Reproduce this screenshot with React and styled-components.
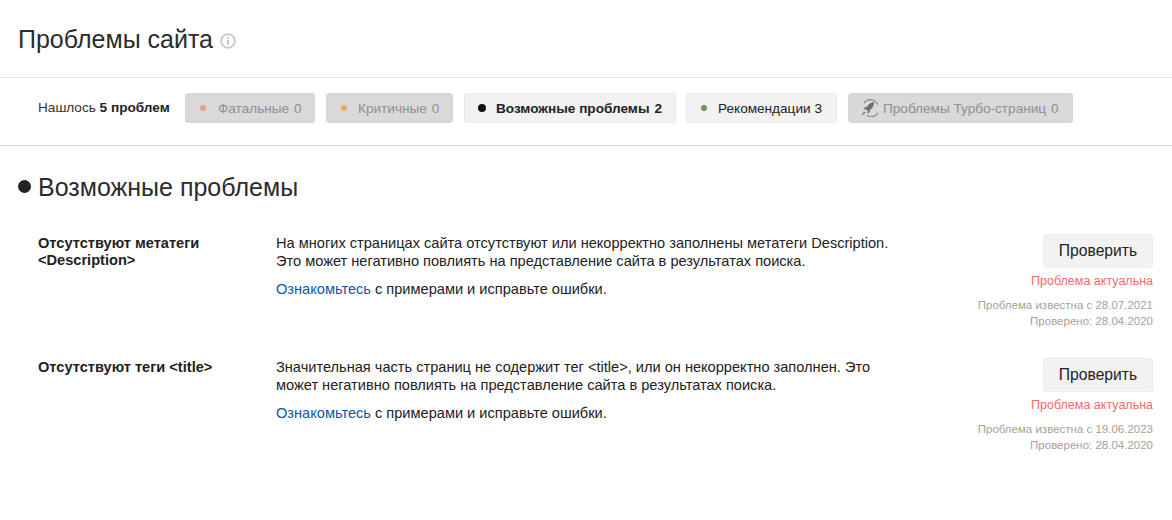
import React from 'react';
import styled, { createGlobalStyle } from 'styled-components';

const Global = createGlobalStyle`
  html, body { margin: 0; padding: 0; background: #fff; }
  body { font-family: "Liberation Sans", Arial, sans-serif; color: #222; }
`;
const Page = styled.div`width: 1172px; height: 520px; overflow: hidden; background: #fff;`;
const Header = styled.header`
  height: 78px; box-sizing: border-box; border-bottom: 1px solid #e3e3e3;
  display: flex; align-items: flex-start; padding: 24px 0 0 18px; gap: 7px;
`;
const Title = styled.h1`margin: 0; font-size: 25px; line-height: 30px; font-weight: 400; color: #2b2b2b;`;
const InfoWrap = styled.span`display: flex; padding-top: 9px; color: #c8c8c8;`;
const FilterBar = styled.nav`
  height: 68px; box-sizing: border-box; border-bottom: 1px solid #dcdcdc;
  display: flex; align-items: flex-start; padding: 15px 0 0 38px;
`;
const Found = styled.div`
  font-size: 13.6px; line-height: 30px; color: #333; width: 147px; flex: none;
  b { color: #222; font-weight: 700; }
`;
const Chip = styled.div`
  height: 30px; width: ${p => p.$w}px; box-sizing: border-box; display: flex; align-items: center;
  padding-left: ${p => p.$pl || 14}px; margin-right: ${p => p.$gap || 11}px;
  font-size: 13.6px; white-space: nowrap; border-radius: 3px;
  border: 1px solid ${p => p.$disabled ? '#d6d6d6' : '#e9e9e9'};
  background: ${p => p.$disabled ? '#d9d9d9' : '#f2f2f2'};
  color: ${p => p.$disabled ? '#8f8f8f' : '#222'};
  font-weight: ${p => p.$bold ? 700 : 400};
`;
const Dot = styled.span`
  width: ${p => p.$size}px; height: ${p => p.$size}px; border-radius: 50%;
  background: ${p => p.$color}; flex: none; margin-right: ${p => p.$mr}px;
`;
const Count = styled.span`margin-left: ${p => p.$ml ?? 5}px;`;
const Section = styled.section`padding: 26px 19px 0 18px;`;
const SectionHead = styled.div`display: flex; align-items: center; height: 30px; margin-bottom: 32px;`;
const HeadDot = styled.span`width: 13px; height: 13px; border-radius: 50%; background: #222; margin: 0 7px 2px 0;`;
const H2 = styled.h2`margin: 0; font-size: 25px; line-height: 30px; font-weight: 400; color: #2b2b2b;`;
const Issue = styled.article`
  display: grid; grid-template-columns: 238px 640px 1fr; padding-left: 20px; min-height: 124px;
`;
const IssueName = styled.div`font-size: 14.6px; line-height: 17px; font-weight: 700; color: #222; padding-top: 1px;`;
const Body = styled.div`font-size: 14.6px; line-height: 18px; color: #222;`;
const Para = styled.p`margin: 0 0 10px;`;
const Link = styled.a`color: #0b58a8; text-decoration: none;`;
const Aside = styled.div`display: flex; flex-direction: column; align-items: flex-end;`;
const Button = styled.button`
  width: 110px; height: 34px; border: 1px solid #ececec; border-radius: 3px; background: #f2f2f2;
  font: 15.7px "Liberation Sans", Arial, sans-serif; color: #222; padding: 0;
`;
const Status = styled.div`font-size: 12.5px; line-height: 14px; color: #f96a6a; margin-top: 6px;`;
const Dates = styled.div`font-size: 11.5px; line-height: 16px; color: #a9a09b; margin-top: 9px; text-align: right;`;

const Info = () => (
  <svg width="16" height="16" viewBox="0 0 16 16" fill="none" stroke="currentColor">
    <circle cx="8" cy="8" r="6.900" strokeWidth="1.800" />
    <path d="M8 7v5" strokeWidth="2" />
    <path d="M8 3.800v2" strokeWidth="2" />
  </svg>
);
const Rocket = () => (
  <svg width="18" height="18" viewBox="0 0 18 18" fill="none" style={{ marginRight: 5, flex: 'none' }}>
    <path d="M4 4.200A7.600 7.600 0 0 1 16 3" stroke="#8a8a8a" strokeWidth="1.100" />
    <path d="M16 3.500A7.600 7.600 0 0 1 7 16.200" stroke="#8a8a8a" strokeWidth="1.100" />
    <path d="M14 2.800c-3.200.5-5.300 2.400-7.300 5.300l-2 .5-1.500 2 2.700-.4 1.900 1.900-.4 2.600 2-1.500.5-2c2.900-2 4-4.500 4.100-8.400z" fill="#6f6f6f" />
    <path d="M4 12.500 1.500 16.500 5.500 14z" fill="#6f6f6f" />
  </svg>
);

const issues = [
  { name: <>Отсутствуют метатеги<br />&lt;Description&gt;</>, text: <>На многих страницах сайта отсутствуют или некорректно заполнены метатеги Description.<br />Это может негативно повлиять на представление сайта в результатах поиска.</>, known: '28.07.2021' },
  { name: 'Отсутствуют теги <title>', text: <>Значительная часть страниц не содержит тег &lt;title&gt;, или он некорректно заполнен. Это<br />может негативно повлиять на представление сайта в результатах поиска.</>, known: '19.06.2023' },
];

export default function App() {
  return (
    <Page>
      <Global />
      <Header>
        <Title>Проблемы сайта</Title>
        <InfoWrap><Info /></InfoWrap>
      </Header>
      <FilterBar>
        <Found>Нашлось <b>5 проблем</b></Found>
        <Chip $disabled $w={130}><Dot $size={6} $color="#ea9a96" $mr={12} />Фатальные<Count>0</Count></Chip>
        <Chip $disabled $w={127}><Dot $size={6} $color="#eeab5f" $mr={11} />Критичные<Count>0</Count></Chip>
        <Chip $bold $w={212} $gap={10} $pl={13}><Dot $size={8} $color="#111" $mr={10} />Возможные проблемы<Count>2</Count></Chip>
        <Chip $w={151}><Dot $size={6} $color="#6b9a55" $mr={11} />Рекомендации<Count $ml={4}>3</Count></Chip>
        <Chip $disabled $w={225} $pl={11}><Rocket />Проблемы Турбо-страниц<Count>0</Count></Chip>
      </FilterBar>
      <Section>
        <SectionHead><HeadDot /><H2>Возможные проблемы</H2></SectionHead>
        {issues.map(i => (
          <Issue key={i.known}>
            <IssueName>{i.name}</IssueName>
            <Body>
              <Para>{i.text}</Para>
              <div><Link>Ознакомьтесь</Link> с примерами и исправьте ошибки.</div>
            </Body>
            <Aside>
              <Button>Проверить</Button>
              <Status>Проблема актуальна</Status>
              <Dates>Проблема известна с {i.known}<br />Проверено: 28.04.2020</Dates>
            </Aside>
          </Issue>
        ))}
      </Section>
    </Page>
  );
}
